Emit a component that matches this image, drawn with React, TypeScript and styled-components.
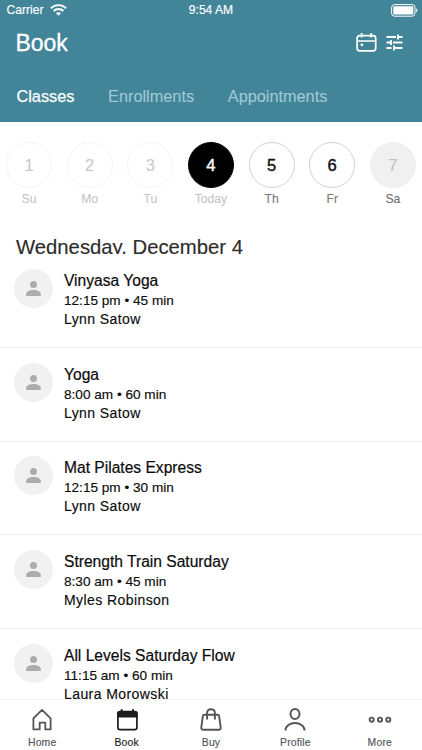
import React from "react";
import styled, { createGlobalStyle } from "styled-components";

const Global = createGlobalStyle`
  * { box-sizing: border-box; }
  body { margin: 0; background: #fff; font-family: "Liberation Sans", Arial, sans-serif; color: #0c0c0c; }
  svg { display: block; }
`;

const Screen = styled.div`
  width: 422px; height: 750px; overflow: hidden;
  display: flex; flex-direction: column; background: #fff;
`;

const Header = styled.header`
  height: 122px; flex: none; background: #428598; color: #fff;
  display: flex; flex-direction: column;
`;
const StatusBar = styled.div`
  height: 20px; padding: 0 4.5px 0 6.5px;
  display: grid; grid-template-columns: 1fr auto 1fr; align-items: center;
  font-size: 12.1px; line-height: 20px; -webkit-text-stroke: 0.15px;
`;
const Carrier = styled.div`display: flex; align-items: center; gap: 7px;`;
const Clock = styled.span`margin-right: 2px;`;
const Battery = styled.div`display: flex; justify-content: flex-end;`;

const TitleRow = styled.div`
  height: 45px; padding: 0 19px 0 15.4px;
  display: flex; align-items: center; justify-content: space-between;
`;
const Title = styled.h1`
  margin: 0; font-size: 23px; font-weight: 400; line-height: 26px; -webkit-text-stroke: 0.3px;
`;
const Actions = styled.div`display: flex; align-items: center; gap: 9px;`;

const Tabs = styled.nav`
  height: 57px; padding: 19px 0 0 16.5px; display: flex; gap: 33.7px;
`;
const Tab = styled.span<{ $active?: boolean }>`
  font-size: 16.3px; line-height: 24px;
  color: ${p => (p.$active ? "#fff" : "#a0c8d5")};
  -webkit-text-stroke: ${p => (p.$active ? "0.25px" : "0.1px")};
`;

const Week = styled.div`
  flex: none; height: 106px; padding: 19.5px 0 0 6px; display: flex; gap: 14.65px;
`;
type DayKind = "past" | "today" | "open" | "closed";
const Day = styled.div`
  width: 46px; flex: none; display: flex; flex-direction: column; align-items: center;
`;
const dayStyles: Record<DayKind, { bg: string; border: string; num: string; label: string }> = {
  past: { bg: "#fff", border: "#f4f4f4", num: "#cbcbcb", label: "#c6c6c6" },
  today: { bg: "#000", border: "#000", num: "#fff", label: "#c6c6c6" },
  open: { bg: "#fff", border: "#d2d2d2", num: "#101010", label: "#7a7a7a" },
  closed: { bg: "#f0f0f0", border: "#f0f0f0", num: "#c2c2c2", label: "#6f6f6f" },
};
const DayCircle = styled.div<{ $kind: DayKind }>`
  width: 46px; height: 46px; border-radius: 50%;
  display: flex; align-items: center; justify-content: center;
  font-size: 16.5px; line-height: 20px;
  background: ${p => dayStyles[p.$kind].bg};
  border: 1px solid ${p => dayStyles[p.$kind].border};
  color: ${p => dayStyles[p.$kind].num};
  -webkit-text-stroke: ${p => (p.$kind === "today" || p.$kind === "open" ? "0.4px" : "0.15px")};
`;
const DayLabel = styled.div<{ $kind: DayKind }>`
  margin-top: 3px; font-size: 12.2px; line-height: 16px;
  color: ${p => dayStyles[p.$kind].label};
  -webkit-text-stroke: 0.1px;
`;

const DateHeading = styled.h2`
  flex: none; margin: 7px 0 0; height: 19px; padding-left: 16px; overflow: hidden;
  font-size: 20.3px; font-weight: 400; line-height: 24px; color: #2c2c2c;
  -webkit-text-stroke: 0.15px;
`;

const List = styled.main`flex: 1; min-height: 0; overflow: hidden;`;
const Row = styled.article`
  height: 93.75px; padding: 14.8px 0 0 13.5px; display: flex; gap: 11.5px;
  border-bottom: 1px solid #f0f0f0;
`;
const Avatar = styled.div`
  width: 39px; height: 39px; flex: none; border-radius: 50%; background: #f1f1f1;
  display: flex; align-items: center; justify-content: center;
`;
const Info = styled.div`margin-top: 2px; white-space: nowrap;`;
const ClassName = styled.div`font-size: 15.6px; line-height: 20px; -webkit-text-stroke: 0.2px;`;
const ClassTime = styled.div`font-size: 13.6px; line-height: 19px; -webkit-text-stroke: 0.15px;`;
const Teacher = styled.div`font-size: 14px; line-height: 19px; letter-spacing: 0.42px; -webkit-text-stroke: 0.15px;`;

const BottomBar = styled.nav`
  flex: none; height: 51px; border-top: 1px solid #f2f2f2; background: #fff;
  display: grid; grid-template-columns: repeat(5, 1fr);
`;
const NavItem = styled.div<{ $active?: boolean }>`
  display: flex; flex-direction: column; align-items: center; padding-top: 8px; gap: 3px;
  color: ${p => (p.$active ? "#1d1d20" : "#54545b")};
  font-size: 10.4px; line-height: 16px; letter-spacing: 0.18px; -webkit-text-stroke: 0.15px;
`;

const WifiIcon = () => (
  <svg width="17" height="12" viewBox="0 0 17 12" fill="none" stroke="#fff" strokeWidth="1.9">
    <path d="M.9 4.2C5.1.1 11.9.1 16.1 4.2" />
    <path d="M3.6 7C6.3 4.3 10.7 4.3 13.4 7" />
    <path d="M8.5 11.7 5.9 9.1C7.3 7.8 9.7 7.8 11.1 9.1Z" fill="#fff" stroke="none" />
  </svg>
);
const BatteryIcon = () => (
  <svg width="27" height="13" viewBox="0 0 27 13">
    <rect x=".6" y=".6" width="23.4" height="11.6" rx="3" fill="none" stroke="#fff" strokeWidth="1" />
    <rect x="2.3" y="2.3" width="20" height="8.2" rx="1.3" fill="#fff" />
    <path d="M25.2 4.3c1.8.8 1.8 3.4 0 4.2Z" fill="#fff" />
  </svg>
);
const CalendarIcon = () => (
  <svg width="21" height="19" viewBox="0 0 21 19" fill="none" stroke="#fff" strokeWidth="1.7">
    <rect x="1.1" y="2.7" width="18.6" height="15.2" rx="2.6" />
    <path d="M1 8h19M5.6 0v4.6M15.2 0v4.6" />
    <circle cx="5.9" cy="11.8" r="1.4" fill="#fff" stroke="none" />
  </svg>
);
const TuneIcon = () => (
  <svg width="17" height="17" viewBox="0 0 17 17" fill="none" stroke="#fff" strokeWidth="1.8">
    <path d="M.5 3H10M12 .5v5M12 3h4.500M.5 8.500H5M5 6v5M7 8.500h9.500M.5 14h5M8 11.500v5M8 14h8.500" />
  </svg>
);
const PersonIcon = () => (
  <svg width="15" height="15" viewBox="0 0 15 15" fill="#acacac">
    <circle cx="7.5" cy="3.6" r="3.5" />
    <path d="M.2 15v-2.2C.2 10.5 4 9.1 7.5 9.1s7.3 1.4 7.3 3.700V15Z" />
  </svg>
);
const HomeIcon = () => (
  <svg width="24" height="24" viewBox="0 0 24 24" fill="none" stroke="currentColor" strokeWidth="1.8" strokeLinejoin="round">
    <path d="M3.400 10.400 12 1.900l8.600 8.500v11h-5.300v-6.800H9.700v6.800H3.400Z" />
  </svg>
);
const BookIcon = () => (
  <svg width="24" height="24" viewBox="0 0 24 24" fill="none" stroke="currentColor" strokeWidth="1.7">
    <rect x="2.9" y="3.700" width="19" height="18" rx="2.200" />
    <path d="M2.100 9.500V5.500q0-2.600 2.600-2.600h15.400q2.600 0 2.600 2.600v4Z" fill="currentColor" stroke="none" />
    <path d="M6.700 1.200v3M18 1.200v3" strokeWidth="2" />
  </svg>
);
const BagIcon = () => (
  <svg width="24" height="24" viewBox="0 0 24 24" fill="none" stroke="currentColor" strokeWidth="1.900" strokeLinejoin="round">
    <path d="M5.300 6.700h13.400q1.200 0 1.400 1.200l1.600 11.500q.2 2.300-2 2.300H4.300q-2.200 0-2-2.300L3.900 7.900q.2-1.200 1.400-1.200Z" />
    <path d="M8.100 11.500V5q0-3.700 3.900-3.700T15.900 5v6.500" />
  </svg>
);
const ProfileIcon = () => (
  <svg width="24" height="24" viewBox="0 0 24 24" fill="none" stroke="currentColor" strokeWidth="2">
    <ellipse cx="12" cy="6" rx="4.500" ry="5" />
    <path d="M2.500 22.600C2.500 12.600 21.500 12.600 21.500 22.600" />
  </svg>
);
const MoreIcon = () => (
  <svg width="24" height="24" viewBox="0 0 24 24" fill="none" stroke="currentColor" strokeWidth="1.900">
    <circle cx="3.700" cy="11.700" r="2.100" />
    <circle cx="12" cy="11.700" r="2.100" />
    <circle cx="20.300" cy="11.700" r="2.100" />
  </svg>
);

const days: { n: number; label: string; kind: DayKind }[] = [
  { n: 1, label: "Su", kind: "past" },
  { n: 2, label: "Mo", kind: "past" },
  { n: 3, label: "Tu", kind: "past" },
  { n: 4, label: "Today", kind: "today" },
  { n: 5, label: "Th", kind: "open" },
  { n: 6, label: "Fr", kind: "open" },
  { n: 7, label: "Sa", kind: "closed" },
];
const classes = [
  { name: "Vinyasa Yoga", time: "12:15 pm • 45 min", teacher: "Lynn Satow" },
  { name: "Yoga", time: "8:00 am • 60 min", teacher: "Lynn Satow" },
  { name: "Mat Pilates Express", time: "12:15 pm • 30 min", teacher: "Lynn Satow" },
  { name: "Strength Train Saturday", time: "8:30 am • 45 min", teacher: "Myles Robinson" },
  { name: "All Levels Saturday Flow", time: "11:15 am • 60 min", teacher: "Laura Morowski" },
];

export default function App() {
  return (
    <Screen>
      <Global />
      <Header>
        <StatusBar>
          <Carrier>Carrier<WifiIcon /></Carrier>
          <Clock>9:54 AM</Clock>
          <Battery><BatteryIcon /></Battery>
        </StatusBar>
        <TitleRow>
          <Title>Book</Title>
          <Actions><CalendarIcon /><TuneIcon /></Actions>
        </TitleRow>
        <Tabs>
          <Tab $active>Classes</Tab>
          <Tab>Enrollments</Tab>
          <Tab>Appointments</Tab>
        </Tabs>
      </Header>
      <Week>
        {days.map(d => (
          <Day key={d.n}>
            <DayCircle $kind={d.kind}>{d.n}</DayCircle>
            <DayLabel $kind={d.kind}>{d.label}</DayLabel>
          </Day>
        ))}
      </Week>
      <DateHeading>Wednesday, December 4</DateHeading>
      <List>
        {classes.map(c => (
          <Row key={c.name}>
            <Avatar><PersonIcon /></Avatar>
            <Info>
              <ClassName>{c.name}</ClassName>
              <ClassTime>{c.time}</ClassTime>
              <Teacher>{c.teacher}</Teacher>
            </Info>
          </Row>
        ))}
      </List>
      <BottomBar>
        <NavItem><HomeIcon />Home</NavItem>
        <NavItem $active><BookIcon />Book</NavItem>
        <NavItem><BagIcon />Buy</NavItem>
        <NavItem><ProfileIcon />Profile</NavItem>
        <NavItem><MoreIcon />More</NavItem>
      </BottomBar>
    </Screen>
  );
}
